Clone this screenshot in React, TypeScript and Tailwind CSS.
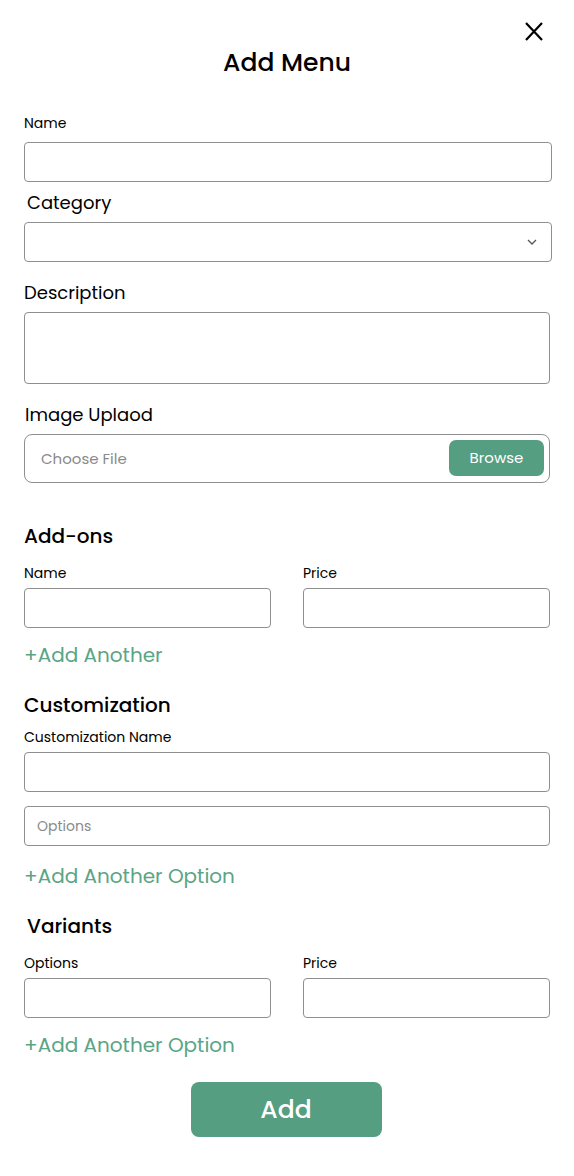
const font = "font-['Poppins','Inter','Noto_Sans',sans-serif]";

function Field({ className = "", placeholder }: { className?: string; placeholder?: string }) {
  return (
    <div className={`h-[40px] rounded-[4px] border border-[#8f8f8f] bg-white flex items-center px-3 ${className}`}>
      {placeholder && <span className="text-[14px] text-[#8a8a8a]">{placeholder}</span>}
    </div>
  );
}

function AddLink({ text, className = "" }: { text: string; className?: string }) {
  return <p className={`text-[20px] leading-[26px] text-[#5aa585] ${className}`}>{text}</p>;
}

export default function App() {
  return (
    <div className={`relative w-[574px] min-h-[1176px] bg-white text-black ${font}`}>
      <button className="absolute right-[30px] top-[21px] w-[20px] h-[21px]" aria-label="Close">
        <svg viewBox="0 0 20 21" className="w-[20px] h-[21px]" fill="none" stroke="#000" strokeWidth="2.2">
          <path d="M2 2 L18 19 M18 2 L2 19" />
        </svg>
      </button>

      <h1 className="pt-[47px] text-center text-[25px] leading-[32px] font-medium">Add Menu</h1>

      <div className="px-6 pb-10">
        <p className="mt-[34px] text-[14px] leading-[20px]">Name</p>
        <Field className="mt-[9px] w-[528px]" />

        <p className="mt-[9px] ml-[3px] text-[18px] leading-[24px]">Category</p>
        <div className="mt-[7px] w-[528px] h-[40px] rounded-[4px] border border-[#8f8f8f] flex items-center justify-end pr-[14px]">
          <svg viewBox="0 0 10 6" className="w-[10px] h-[6px]" fill="none" stroke="#555" strokeWidth="1.3">
            <path d="M1 1 L5 5 L9 1" />
          </svg>
        </div>

        <p className="mt-[19px] text-[18px] leading-[24px]">Description</p>
        <div className="mt-[7px] w-[526px] h-[72px] rounded-[4px] border border-[#8f8f8f]" />

        <p className="mt-[19px] ml-[1px] text-[18px] leading-[24px]">Image Uplaod</p>
        <div className="mt-[7px] w-[526px] h-[49px] rounded-[8px] border border-[#8f8f8f] flex items-center justify-between pl-[16px] pr-[5px]">
          <span className="mt-[2px] text-[15px] text-[#8a8a8a]">Choose File</span>
          <button className="w-[95px] h-[36px] -mt-[1px] rounded-[7px] bg-[#559e82] text-white text-[15px]">Browse</button>
        </div>

        <h2 className="mt-[40px] text-[20px] leading-[26px] font-medium">Add-ons</h2>
        <div className="mt-[14px] grid grid-cols-[247px_247px] gap-x-[32px] w-[526px]">
          <p className="text-[14px] leading-[20px]">Name</p>
          <p className="text-[14px] leading-[20px]">Price</p>
          <Field className="mt-[5px]" />
          <Field className="mt-[5px]" />
        </div>
        <AddLink text="+Add Another" className="mt-[14px]" />

        <h2 className="mt-[24px] text-[20px] leading-[26px] font-medium">Customization</h2>
        <p className="mt-[9px] text-[14px] leading-[20px]">Customization Name</p>
        <Field className="mt-[5px] w-[526px]" />
        <Field className="mt-[14px] w-[526px]" placeholder="Options" />
        <AddLink text="+Add Another Option" className="mt-[17px]" />

        <h2 className="mt-[24px] ml-[3px] text-[20px] leading-[26px] font-medium">Variants</h2>
        <div className="mt-[14px] grid grid-cols-[247px_247px] gap-x-[32px] w-[526px]">
          <p className="text-[14px] leading-[20px]">Options</p>
          <p className="text-[14px] leading-[20px]">Price</p>
          <Field className="mt-[5px]" />
          <Field className="mt-[5px]" />
        </div>
        <AddLink text="+Add Another Option" className="mt-[14px]" />

        <div className="mt-[24px] flex justify-center">
          <button className="-ml-[2px] w-[191px] h-[55px] rounded-[8px] bg-[#559e82] text-white text-[25px] font-medium">Add</button>
        </div>
      </div>
    </div>
  );
}
